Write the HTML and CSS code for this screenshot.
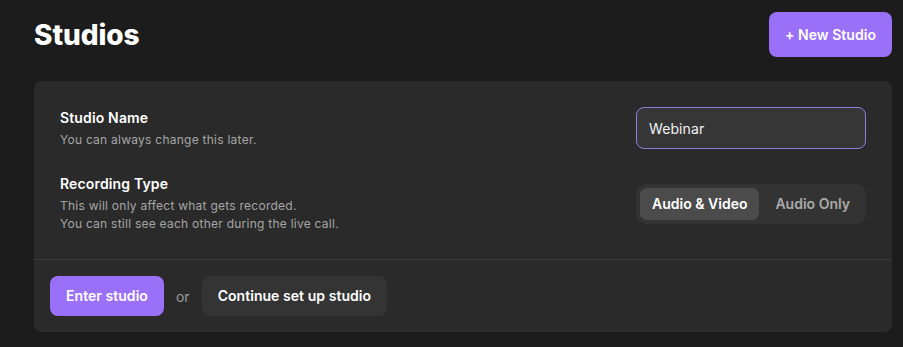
FILE: index.html
```html
<!DOCTYPE html>
<html lang="en">
<head>
<meta charset="utf-8">
<title>Studios</title>
<link rel="stylesheet" href="styles.css">
</head>
<body>
<div class="page">
  <header class="header">
    <h1 class="title">Studios</h1>
    <button class="btn btn-primary btn-new">+ New Studio</button>
  </header>
  <section class="card">
    <div class="card-body">
      <div class="row">
        <div class="field-text">
          <div class="label">Studio Name</div>
          <div class="desc">You can always change this later.</div>
        </div>
        <div class="input">Webinar</div>
      </div>
      <div class="row">
        <div class="field-text">
          <div class="label">Recording Type</div>
          <div class="desc">This will only affect what gets recorded.<br>You can still see each other during the live call.</div>
        </div>
        <div class="segment">
          <button class="seg-btn active">Audio &amp; Video</button>
          <button class="seg-btn">Audio Only</button>
        </div>
      </div>
    </div>
    <div class="card-footer">
      <button class="btn btn-primary">Enter studio</button>
      <span class="or">or</span>
      <button class="btn btn-secondary">Continue set up studio</button>
    </div>
  </section>
</div>
</body>
</html>
```

FILE: styles.css
```css
* { box-sizing: border-box; }
html, body {
  margin: 0;
  background: #1c1c1c;
  font-family: Inter, "Noto Sans", "Liberation Sans", sans-serif;
  color: #ffffff;
}
.page {
  padding: 12px 11px 0 34px;
}
.header {
  display: flex;
  align-items: center;
  justify-content: space-between;
  height: 45px;
}
.title {
  margin: 0;
  font-size: 28px;
  font-weight: 800;
  line-height: 34px;
  letter-spacing: -0.1px;
}
.btn {
  font-family: inherit;
  border: none;
  color: #ffffff;
  font-size: 14px;
  font-weight: 600;
  line-height: 20px;
  padding: 10px 16px;
  border-radius: 8px;
  letter-spacing: 0.05px;
  cursor: pointer;
}
.btn-primary { background: #9b70f8; }
.btn-secondary { background: #343434; }
.btn-new {
  height: 45px;
  padding: 0 16px;
}
.card {
  margin-top: 24px;
  background: #2a2a2a;
  border-radius: 7px;
}
.card-body {
  padding: 26px;
  display: flex;
  flex-direction: column;
  gap: 25px;
  border-bottom: 1px solid #3b3b3b;
}
.row {
  display: flex;
  align-items: center;
  justify-content: space-between;
}
.label {
  font-size: 14px;
  font-weight: 600;
  line-height: 20px;
  letter-spacing: 0.15px;
  margin-bottom: 3px;
}
.desc {
  font-size: 12px;
  line-height: 18px;
  letter-spacing: 0.25px;
  color: #a6a6a6;
}
.input {
  width: 230px;
  height: 42px;
  display: flex;
  align-items: center;
  padding: 0 12px;
  background: #363636;
  border: 1px solid #8d7fdc;
  border-radius: 8px;
  font-size: 14px;
  letter-spacing: 0.1px;
  color: #f2f2f2;
}
.segment {
  display: flex;
  gap: 4px;
  padding: 4px;
  background: #333333;
  border-radius: 10px;
}
.seg-btn {
  font-family: inherit;
  border: none;
  background: transparent;
  color: #a9a9a9;
  font-size: 14px;
  font-weight: 600;
  line-height: 20px;
  padding: 6px 12px;
  border-radius: 7px;
}
.seg-btn.active {
  background: #4b4b4b;
  color: #ffffff;
}
.card-footer {
  display: flex;
  align-items: center;
  gap: 12px;
  padding: 16px;
}
.or {
  font-size: 14px;
  color: #9c9c9c;
}
```
